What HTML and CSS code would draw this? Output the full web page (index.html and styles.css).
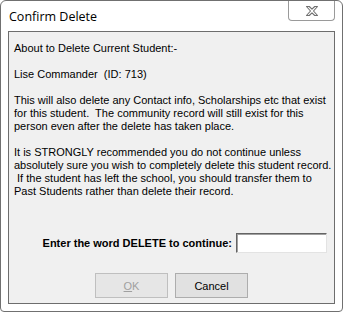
FILE: index.html
```html
<!DOCTYPE html>
<html>
<head>
    <meta charset="UTF-8">
    <title>Confirm Delete</title>
    <link rel="stylesheet" href="styles.css">
</head>
<body>
    <div class="window">
        <div class="titlebar">
            <span class="title">Confirm Delete</span>
            <a href="javascript:;" class="close">
                <svg width="14" height="12" viewBox="0 0 14 12">
                    <path d="M1.5 1.5 L4.3 1.5 L7 4.2 L9.7 1.5 L12.5 1.5 L8.5 6 L12.5 10.5 L9.7 10.5 L7 7.8 L4.3 10.5 L1.5 10.5 L5.5 6 Z" fill="#fff" stroke="#707070" stroke-width="1.1" stroke-linejoin="round"/>
                </svg>
            </a>
        </div>
        <div class="client">
            <div class="message">
                <p>About to Delete Current Student:-</p>
                <p>Lise Commander&nbsp; (ID: 713)</p>
                <p>This will also delete any Contact info, Scholarships etc that exist<br>
                for this student.&nbsp; The community record will still exist for this<br>
                person even after the delete has taken place.</p>
                <p>It is STRONGLY recommended you do not continue unless<br>
                absolutely sure you wish to completely delete this student record.<br>
                &nbsp;If the student has left the school, you should transfer them to<br>
                Past Students rather than delete their record.</p>
            </div>
            <div class="confirm">
                <label for="word">Enter the word DELETE to continue:</label>
                <input type="text" id="word">
            </div>
            <div class="buttons">
                <button class="btn" disabled><u>O</u>K</button>
                <button class="btn">Cancel</button>
            </div>
        </div>
    </div>
</body>
</html>
```

FILE: styles.css
```css
* {
    margin: 0;
    padding: 0;
    box-sizing: border-box;
}
body {
    width: 343px;
    height: 312px;
    background: #fff;
    font-family: "Liberation Sans", Arial, sans-serif;
}
/* 外框 */
.window {
    width: 343px;
    height: 312px;
    border: 1px solid #707070;
    border-radius: 6px 6px 4px 4px;
    background: #fff;
    padding: 0 7px 7px 7px;
    display: flex;
    flex-direction: column;
}
.titlebar {
    height: 30px;
    display: flex;
    align-items: flex-start;
}
.title {
    margin: 8px 0 0 1px;
    font-family: "Open Sans", "Noto Sans", sans-serif;
    font-size: 12.5px;
    line-height: 16px;
    color: #000;
}
.close {
    margin-left: auto;
    width: 47px;
    height: 20px;
    border: 1px solid #9a9a9a;
    border-top: none;
    border-radius: 0 0 4px 4px;
    display: flex;
    align-items: center;
    justify-content: center;
}
/* 内容区 */
.client {
    flex: 1;
    background: #f0f0f0;
    border: 1px solid #6d6d6d;
    display: flex;
    flex-direction: column;
}
.message {
    padding: 10px 0 0 5px;
    font-size: 11px;
    line-height: 13px;
    color: #000;
}
.message p {
    margin-bottom: 13px;
}
.message p:last-child {
    margin-bottom: 0;
}
.confirm {
    margin-top: 35px;
    display: flex;
    justify-content: flex-end;
    align-items: center;
    gap: 4px;
    padding-right: 7px;
}
.confirm label {
    font-size: 11px;
    font-weight: bold;
    color: #000;
}
.confirm input {
    width: 91px;
    height: 20px;
    border: 1px solid;
    border-color: #646464 #e3e3e3 #e3e3e3 #646464;
    box-shadow: inset 1px 1px 0 #a0a0a0;
    background: #fff;
    outline: none;
}
.buttons {
    margin-top: 20px;
    display: flex;
    justify-content: center;
    gap: 7px;
}
.btn {
    width: 73px;
    height: 25px;
    border: 1px solid #adadad;
    background: #e1e1e1;
    font-family: "Liberation Sans", Arial, sans-serif;
    font-size: 11px;
    color: #000;
}
.btn:disabled {
    border-color: #bfbfbf;
    background: #e6e6e6;
    color: #a0a0a0;
}
```
